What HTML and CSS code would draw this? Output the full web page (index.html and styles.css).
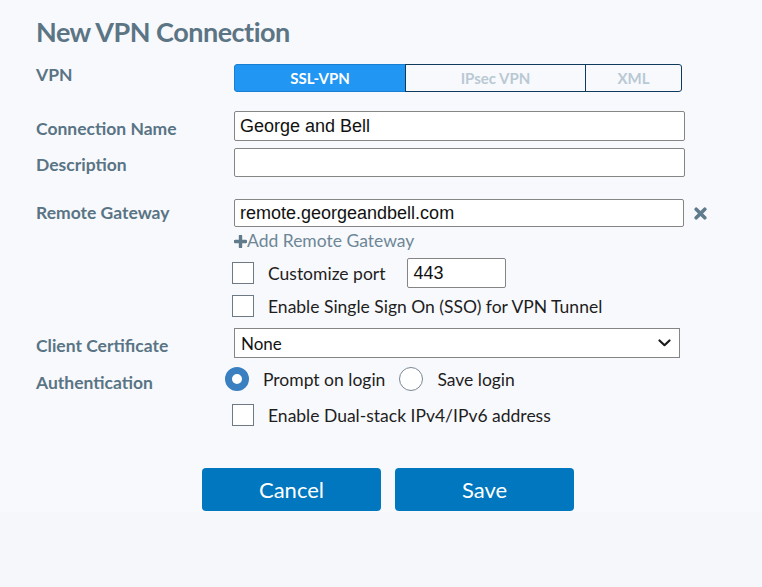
FILE: index.html
```html
<!DOCTYPE html>
<html>
<head>
<meta charset="utf-8">
<link rel="stylesheet" href="styles.css">
</head>
<body>
<div class="page">
  <h1 class="title">New VPN Connection</h1>

  <div class="row row-vpn">
    <div class="label lab-vpn">VPN</div>
    <div class="seg">
      <div class="seg-item seg-active seg-ssl">SSL-VPN</div>
      <div class="seg-item seg-ipsec">IPsec VPN</div>
      <div class="seg-item seg-xml">XML</div>
    </div>
  </div>

  <div class="row row-name">
    <div class="label lab-name">Connection Name</div>
    <div class="input input-wide input-h30">George and Bell</div>
  </div>

  <div class="row row-desc">
    <div class="label lab-desc">Description</div>
    <div class="input input-wide input-h29"></div>
  </div>

  <div class="row row-gw">
    <div class="label lab-gw">Remote Gateway</div>
    <div class="input input-gw input-h28">remote.georgeandbell.com</div>
    <svg class="xicon" width="13" height="13" viewBox="0 0 13 13"><path d="M2.2 2.2 L10.8 10.8 M10.8 2.2 L2.2 10.8" stroke="#5f7b8c" stroke-width="3.6" stroke-linecap="round"/></svg>
  </div>

  <div class="indent add-link">
    <svg class="plus" width="13" height="13" viewBox="0 0 13 13"><path d="M6.5 1.2 V11.8 M1.2 6.5 H11.8" stroke="#5f7b8c" stroke-width="3.4" stroke-linecap="round"/></svg><span>Add Remote Gateway</span>
  </div>

  <div class="indent opt row-port">
    <span class="check"></span>
    <span class="opt-text">Customize port</span>
    <div class="input input-port">443</div>
  </div>

  <div class="indent opt row-sso">
    <span class="check"></span>
    <span class="opt-text">Enable Single Sign On (SSO) for VPN Tunnel</span>
  </div>

  <div class="row row-cert">
    <div class="label lab-cert">Client Certificate</div>
    <div class="select">
      <span>None</span>
      <svg class="chev" width="13" height="8" viewBox="0 0 13 8"><path d="M1.5 1.5 L6.5 6.2 L11.5 1.5" fill="none" stroke="#1a1a1a" stroke-width="2.2" stroke-linecap="round" stroke-linejoin="round"/></svg>
    </div>
  </div>

  <div class="row row-auth">
    <div class="label lab-auth">Authentication</div>
    <div class="radios">
      <span class="radio radio-on"></span>
      <span class="radio-text">Prompt on login</span>
      <span class="radio"></span>
      <span class="radio-text">Save login</span>
    </div>
  </div>

  <div class="indent opt row-dual">
    <span class="check"></span>
    <span class="opt-text">Enable Dual-stack IPv4/IPv6 address</span>
  </div>

  <div class="buttons">
    <div class="btn">Cancel</div>
    <div class="btn">Save</div>
  </div>
</div>
</body>
</html>
```

FILE: styles.css
```css
html, body {
  margin: 0;
  padding: 0;
}
body {
  background: #f5f7fb;
  font-family: Lato, "Noto Sans", sans-serif;
  width: 762px;
  height: 587px;
  overflow: hidden;
}
.page {
  background: #f8f9fc;
  padding: 15px 0 1px 36px;
  height: 496px;
}
.title {
  margin: 0;
  font-size: 27px;
  line-height: 34px;
  font-weight: 700;
  color: #5b7585;
  letter-spacing: -0.5px;
}
.row {
  display: flex;
  align-items: flex-start;
}
.label {
  width: 198px;
  flex: none;
  font-size: 17.5px;
  line-height: 20px;
  font-weight: 700;
  color: #597485;
}
.row-vpn { margin-top: 15px; }
.lab-vpn { padding-top: 1px; }
.row-name { margin-top: 19px; }
.lab-name { padding-top: 8px; }
.row-desc { margin-top: 7px; }
.lab-desc { padding-top: 7px; }
.row-gw { margin-top: 22px; align-items: center; }
.lab-gw { padding-top: 4px; align-self: flex-start; }
.row-cert { margin-top: 11px; }
.lab-cert { padding-top: 8px; }
.row-auth { margin-top: 9px; height: 24px; }
.lab-auth { padding-top: 6px; }

.seg {
  display: flex;
  height: 28px;
  width: 448px;
  box-sizing: border-box;
  border-radius: 3px;
  overflow: hidden;
}
.seg-item {
  box-sizing: border-box;
  display: flex;
  align-items: center;
  justify-content: center;
  font-size: 15px;
  font-weight: 700;
  color: #b9c9d4;
  border: 1.5px solid #0f3a5b;
  background: #f8f9fc;
}
.seg-ssl { width: 171px; }
.seg-ipsec { width: 181px; border-left: 1.5px solid #0f3a5b; border-right: 1.5px solid #0f3a5b; }
.seg-xml { width: 96px; border-left: none; border-radius: 0 3px 3px 0; }
.seg-active {
  background: #2196f3;
  border-color: #1a7fcf;
  color: #ffffff;
  border-radius: 3px 0 0 3px;
  border-right: none;
}

.input {
  box-sizing: border-box;
  background: #ffffff;
  border: 1px solid #858585;
  border-radius: 2px;
  font-family: "Liberation Sans", Arial, sans-serif;
  font-size: 18px;
  color: #111111;
  padding-left: 5px;
  display: flex;
  align-items: center;
}
.input-wide { width: 451px; }
.input-h30 { height: 30px; }
.input-h29 { height: 29px; }
.input-h28 { height: 28px; }
.input-gw { width: 450px; height: 28px; }
.xicon { margin-left: 10px; flex: none; }

.indent { margin-left: 198px; }
.add-link {
  margin-top: 4px;
  display: flex;
  align-items: center;
  font-size: 17.5px;
  line-height: 20px;
  color: #6d8797;
}
.plus { flex: none; }

.opt {
  display: flex;
  align-items: center;
  font-size: 17.5px;
  line-height: 20px;
  color: #1e1e1e;
}
.opt-text { padding-top: 2px; }
.check {
  box-sizing: border-box;
  width: 22px;
  height: 22px;
  border: 1px solid #6d7a85;
  background: #ffffff;
  margin-left: -2px;
  margin-right: 14px;
  flex: none;
}
.row-port { margin-top: 7px; height: 30px; }
.input-port {
  width: 99px;
  height: 30px;
  margin-left: 22px;
  padding-left: 5px;
}
.row-sso { margin-top: 7px; height: 22px; }
.row-dual { margin-top: 13px; height: 22px; }

.select {
  box-sizing: border-box;
  width: 446px;
  height: 30px;
  background: #ffffff;
  border: 1px solid #858585;
  display: flex;
  align-items: center;
  justify-content: space-between;
  padding: 0 8px 0 6px;
  font-size: 17px;
  color: #111111;
}

.radios {
  display: flex;
  align-items: center;
  height: 24px;
  margin-left: -9px;
  font-size: 17.5px;
  line-height: 20px;
  color: #1e1e1e;
}
.radio {
  box-sizing: border-box;
  width: 24px;
  height: 24px;
  border-radius: 50%;
  border: 1px solid #7a8793;
  background: #ffffff;
  flex: none;
  margin-right: 14px;
}
.radio-on {
  border: 7px solid #3a7fc0;
  background: #ffffff;
}
.radio-text { margin-right: 14px; padding-top: 2px; }

.buttons {
  display: flex;
  gap: 14px;
  margin-top: 42px;
  margin-left: 166px;
}
.btn {
  width: 179px;
  height: 43px;
  border-radius: 4px;
  background: #0077be;
  color: #ffffff;
  font-size: 22px;
  display: flex;
  align-items: center;
  justify-content: center;
}
```
